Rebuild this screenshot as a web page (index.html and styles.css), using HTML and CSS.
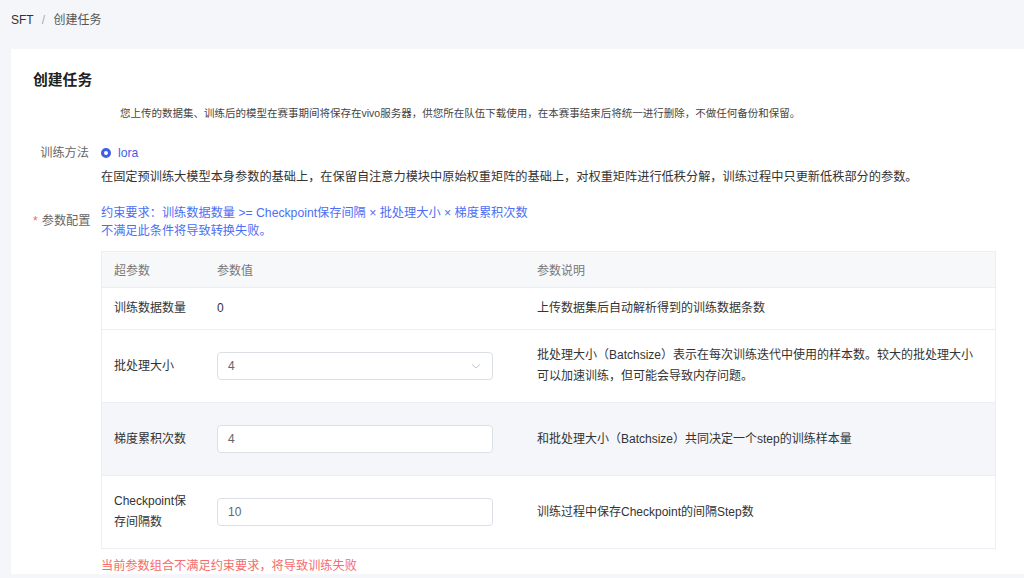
FILE: index.html
```html
<!DOCTYPE html>
<html lang="zh-CN">
<head>
    <meta charset="UTF-8">
    <meta name="viewport" content="width=device-width, initial-scale=1.0">
    <title>创建任务</title>
    <link rel="stylesheet" href="styles.css">
</head>
<body>

    <div class="breadcrumb">
        <span>SFT</span>
        <span class="sep">/</span>
        <span class="current">创建任务</span>
    </div>

    <div class="card">
        <h2 class="title">创建任务</h2>
        <p class="notice">您上传的数据集、训练后的模型在赛事期间将保存在vivo服务器，供您所在队伍下载使用，在本赛事结束后将统一进行删除，不做任何备份和保留。</p>

        <div class="form-row method-row">
            <div class="label">训练方法</div>
            <div class="content">
                <label class="radio"><span class="dot"></span>lora</label>
                <div class="desc">在固定预训练大模型本身参数的基础上，在保留自注意力模块中原始权重矩阵的基础上，对权重矩阵进行低秩分解，训练过程中只更新低秩部分的参数。</div>
            </div>
        </div>

        <div class="form-row param-row">
            <div class="label"><span class="star">*</span>参数配置</div>
            <div class="content">
                <div class="rule">约束要求：训练数据数量 &gt;= Checkpoint保存间隔 × 批处理大小 × 梯度累积次数<br>不满足此条件将导致转换失败。</div>

                <table class="params">
                    <thead>
                        <tr>
                            <th class="c1">超参数</th>
                            <th class="c2">参数值</th>
                            <th class="c3">参数说明</th>
                        </tr>
                    </thead>
                    <tbody>
                        <tr class="short">
                            <td>训练数据数量</td>
                            <td>0</td>
                            <td>上传数据集后自动解析得到的训练数据条数</td>
                        </tr>
                        <tr>
                            <td>批处理大小</td>
                            <td>
                                <div class="field select">
                                    <span>4</span>
                                    <svg width="12" height="12" viewBox="0 0 12 12"><path d="M2 4.5 L6 8 L10 4.5" fill="none" stroke="#c0c4cc" stroke-width="1"/></svg>
                                </div>
                            </td>
                            <td>批处理大小（Batchsize）表示在每次训练迭代中使用的样本数。较大的批处理大小可以加速训练，但可能会导致内存问题。</td>
                        </tr>
                        <tr class="hover">
                            <td>梯度累积次数</td>
                            <td><div class="field">4</div></td>
                            <td>和批处理大小（Batchsize）共同决定一个step的训练样本量</td>
                        </tr>
                        <tr>
                            <td>Checkpoint保存间隔数</td>
                            <td><div class="field">10</div></td>
                            <td>训练过程中保存Checkpoint的间隔Step数</td>
                        </tr>
                    </tbody>
                </table>

                <div class="error">当前参数组合不满足约束要求，将导致训练失败</div>
            </div>
        </div>
    </div>

</body>
</html>
```

FILE: styles.css
```css
body {
    margin: 0;
    background: #f5f6fa;
    font-family: "Liberation Sans", "Noto Sans CJK SC", sans-serif;
    color: #333;
    font-size: 12.2px;
}

.breadcrumb {
    height: 49px;
    box-sizing: border-box;
    padding: 11px 11px 0;
    line-height: 18px;
    font-size: 12px;
    color: #333;
}

.breadcrumb .sep {
    color: #aaa;
    margin: 0 5px;
}

.breadcrumb .current {
    color: #555;
}

.card {
    background: #fff;
    margin-left: 11px;
    height: 525px;
    padding: 20px 0 0 22px;
    box-sizing: border-box;
}

.title {
    margin: 0;
    font-size: 14.8px;
    line-height: 22px;
    font-weight: 600;
    color: #222;
}

.notice {
    margin: 13px 0 0;
    padding-left: 87px;
    font-size: 10.5px;
    line-height: 18px;
    color: #444;
}

.form-row {
    display: flex;
}

.form-row .label {
    width: 56px;
    padding-right: 12px;
    text-align: right;
    white-space: nowrap;
    color: #666;
    line-height: 20px;
    flex-shrink: 0;
}

.method-row {
    margin-top: 21px;
}

.radio {
    display: flex;
    align-items: center;
    line-height: 20px;
    color: #3f5fe6;
}

.dot {
    width: 10px;
    height: 10px;
    box-sizing: border-box;
    border: 3px solid #3f5fe6;
    border-radius: 50%;
    margin-right: 7px;
}

.desc {
    margin-top: 4px;
    line-height: 20px;
}

.param-row {
    margin-top: 17px;
}

.param-row .label {
    padding-top: 7px;
}

.star {
    color: #f56c6c;
    margin-right: 4px;
}

.rule {
    color: #4c6ef5;
    line-height: 18px;
}

.params {
    margin-top: 11px;
    width: 895px;
    border-collapse: collapse;
    border: 1px solid #ebeef5;
}

.params th {
    background: #f7f8fa;
    font-weight: normal;
    color: #777;
    font-size: 12px;
    text-align: left;
    height: 35px;
    padding: 0 12px;
    border-bottom: 1px solid #ebeef5;
}

.params .c1 { width: 79px; }
.params .c2 { width: 296px; }

.params td {
    height: 73px;
    padding: 0 12px;
    font-size: 12px;
    line-height: 21px;
    border-bottom: 1px solid #ebeef5;
    box-sizing: border-box;
}

.params tr.short td {
    height: 42px;
}

.params tr.hover td {
    background: #f5f6fa;
}

.field {
    width: 276px;
    height: 28px;
    box-sizing: border-box;
    border: 1px solid #dcdfe6;
    border-radius: 4px;
    background: #fff;
    padding: 0 10px;
    line-height: 26px;
    color: #666;
}

.select {
    display: flex;
    justify-content: space-between;
    align-items: center;
}

.error {
    margin-top: 8px;
    color: #f56c6c;
    line-height: 18px;
}
```
